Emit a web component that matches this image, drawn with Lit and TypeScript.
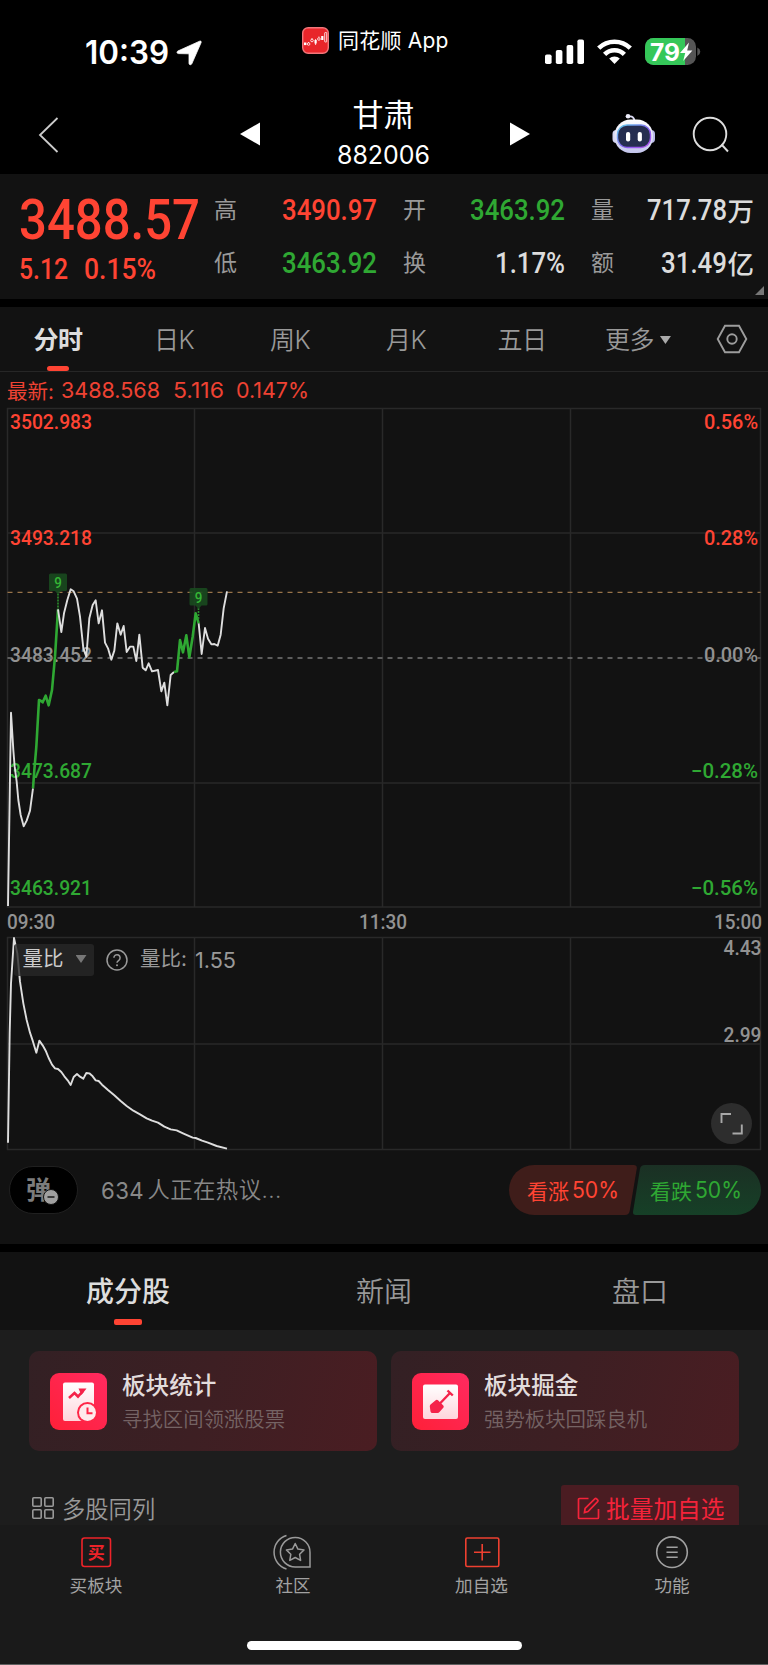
import { LitElement, html, css, svg } from "lit";
import { customElement } from "lit/decorators.js";

const toPath = (raw: string, dy: number) =>
  raw
    .trim()
    .split(/\s+/)
    .map((p) => {
      const [x, y] = p.split(",").map(Number);
      return `${(x / 3).toFixed(2)},${(y / 3 + dy).toFixed(2)}`;
    })
    .join(" ");

// Price series in third-pixel units, split where the run colour changes.
const price = [
  { c: "w", d: "24,1518 33,938 40,1050 44,1100 50,1145 55,1200 62,1245 71,1279 80,1262 90,1232 99,1165" },
  { c: "g", d: "99,1165 103,1110 109,1040 117,900 122,902 128,907 137,887 146,916 156,870 165,770 174,628" },
  { c: "w", d: "174,628 184,696 192,640 202,600 212,568 221,574 231,596 240,650 250,745 259,770 268,655 278,615 287,601 296,670 306,631 315,728 324,745 334,779 343,752 352,670 362,704 371,678 380,756 390,740 400,740 409,783 418,704 428,803 437,811 446,790 456,814 474,810 484,874 493,848 502,916 512,825 522,816" },
  { c: "g", d: "522,816 531,814 540,720 549,757 559,706 568,772 578,710 587,640 596,670" },
  { c: "w", d: "596,670 605,762 615,684 624,716 634,733 643,732 653,737 662,704 671,625 681,574" },
];
const ratio =
  "24,728 29,400 33,250 42,114 52,160 60,245 70,310 80,360 90,398 99,425 109,458 118,422 128,436 137,452 146,474 156,494 165,505 174,507 184,516 193,529 203,541 212,555 221,531 231,522 240,530 250,536 259,519 268,520 278,529 287,541 296,543 306,554 324,570 343,586 362,603 380,618 400,632 420,643 440,655 456,662 474,668 493,680 512,688 530,691 549,700 578,713 587,714 606,722 624,728 650,738 681,746";

const columns = [7.5, 194.5, 382.5, 570.5, 760.5];

// A numeric readout squeezed to a given width; the box is exactly cap-height tall.
const num = (text: string, width: number, cap: number, cls = "") => html`
  <svg class="num ${cls}" width=${width} height=${cap}>
    <text x="0" y=${cap} font-size=${cap / 0.711} textLength=${width} lengthAdjust="spacingAndGlyphs">${text}</text>
  </svg>`;

const label = (text: string, x: number, y: number, w: number, cls: string) => svg`
  <text class=${cls} x=${x} y=${y} font-size="20.6" textLength=${w} lengthAdjust="spacingAndGlyphs">${text}</text>`;

@customElement("app-root")
export class AppRoot extends LitElement {
  static styles = css`
    :host {
      display: block;
      width: 768px;
      height: 1665px;
      overflow: hidden;
      background: #000;
      color: #999;
      font-family: Inter, "Noto Sans CJK SC", sans-serif;
      --red: #ff4433;
      --green: #2fa833;
    }
    * { box-sizing: border-box; }
    svg { display: block; flex: none; overflow: visible; }
    .num { font-family: Roboto, sans-serif; font-weight: 500; fill: currentColor; }
    .sf { font-family: Inter, sans-serif; font-weight: 400; }
    .semi { font-weight: 600; }
    .red { color: var(--red); }
    .green { color: var(--green); }
    .lit { color: #dcdcdc; }

    .status { height: 88px; display: flex; color: #fff; align-items: flex-start; }
    .clock { width: 302px; padding: 41px 0 0 85px; display: flex; gap: 7px; }
    .source { width: 243px; padding-top: 27px; display: flex; align-items: center; gap: 9px; font-size: 21px; line-height: 27px; letter-spacing: 0.2px; }
    .source span { white-space: pre; }
    .system { padding-top: 38px; display: flex; align-items: center; gap: 13px; }

    .nav { height: 86px; display: flex; color: #fff; }
    .nav svg { margin-top: 24px; }
    .back { margin-left: 38px; }
    .prev { margin-left: 180px; }
    .title { width: 250px; padding-right: 3px; display: flex; flex-direction: column; align-items: center; }
    .title .name { font-size: 31px; line-height: 32px; margin-top: 11px; height: 47px; }
    .title svg { margin-top: 0; }
    .bot { margin-left: 80px; }
    .search { margin-left: 34px; }

    .panel { background: #121212; }
    .quote { height: 125px; padding-top: 25px; display: flex; position: relative; margin-bottom: 8px; }
    .last { width: 214px; padding-left: 19px; }
    .change { display: flex; gap: 16px; margin-top: 19px; }
    .stats { display: grid; grid-template-columns: 23px 140px 26px 23px 139px 26px 23px 140px; grid-template-rows: 22px 22px; row-gap: 31px; align-items: center; }
    .stats .k { font-size: 23px; line-height: 22px; }
    .stats .v { display: flex; justify-content: flex-end; align-items: center; gap: 1px; margin-top: -1px; }
    .stats .v b { font: 500 26.5px/22px "Noto Sans CJK SC"; }
    .corner { position: absolute; right: 4px; bottom: 4px; width: 9px; height: 9px; background: #777; clip-path: polygon(100% 0, 100% 100%, 0 100%); }

    .periods { height: 65px; display: flex; border-bottom: 1px solid #262626; font: 350 25px/58px Inter, "Noto Sans CJK SC"; }
    .periods .tab { width: 116px; display: flex; justify-content: center; align-items: center; gap: 6px; height: 64px; padding-top: 2px; position: relative; letter-spacing: -0.6px; }
    .periods .on { color: #ddd; font-weight: 700; }
    .periods .on::after { content: ""; position: absolute; left: 47px; bottom: 0; width: 22px; height: 5px; border-radius: 2.5px; background: var(--red); }
    .caret { width: 11px; height: 8px; background: #aaa; clip-path: polygon(0 0, 100% 0, 50% 100%); }
    .gear { margin: 17px 0 0 20px; }

    .latest { height: 36px; padding-left: 7px; display: flex; align-items: center; font-size: 20.5px; color: #ee4233; }
    .latest .k { width: 54px; }
    .latest .a { margin-right: 12.5px; }
    .chart text { font-family: Roboto, sans-serif; font-weight: 500; fill: #929292; }
    .chart text.r { fill: var(--red); }
    .chart text.g { fill: var(--green); }
    .chart text.flag { fill: #35b535; font-weight: 500; }
    .grid { stroke: #292929; stroke-width: 1.5; fill: none; }
    .w { stroke: #dedede; stroke-width: 1.9; fill: none; stroke-linejoin: round; }
    .g-line { stroke: #2fa833; stroke-width: 2.6; fill: none; stroke-linejoin: round; }

    .ratio { position: relative; }
    .legend { position: absolute; left: 14px; top: 7px; height: 32px; display: flex; align-items: center; font-size: 20.5px; line-height: 30px; }
    .pick { width: 80px; height: 32px; padding: 0 0 2px 8.500px; display: flex; align-items: center; gap: 12px; border-radius: 3px; background: rgba(40, 40, 40, 0.8); color: #ccc; }
    .pick .caret { background: #777; height: 8px; }
    .help { margin: 0 12px 0 12px; }
    .legend .k { width: 55px; padding-bottom: 2px; }
    .expand { position: absolute; left: 711px; top: 165.5px; width: 41px; height: 41px; border-radius: 50%; background: #2d2d2d; }

    .talk { height: 94px; padding: 15px 0 0 8.500px; display: flex; margin-bottom: 8px; }
    .bullet { position: relative; width: 69px; height: 48px; margin-top: 1px; border-radius: 24px; background: #000; border: 1px solid #202020; padding-left: 16.500px; font: 700 25px/42px "Noto Sans CJK SC"; color: #7c7c7c; }
    .bullet svg { position: absolute; left: 33px; top: 22px; }
    .hot { width: 431.500px; height: 50px; padding-left: 23px; display: flex; align-items: center; gap: 4px; font: 350 22.4px/50px Inter, "Noto Sans CJK SC"; letter-spacing: 0.4px; color: #888; }
    .votes { display: flex; }
    .vote { position: relative; width: 128px; height: 50px; display: flex; align-items: center; gap: 3px; font-size: 21px; }
    .vote.up { padding-left: 18px; }
    .vote.down { padding-left: 17px; margin-left: -4px; }
    .vote .shape { position: absolute; inset: 0; }
    .vote span, .vote .num { position: relative; }

    .sections { height: 78px; display: grid; grid-template-columns: repeat(3, 1fr); text-align: center; font: 350 28px/76px "Noto Sans CJK SC"; }
    .sections div { position: relative; }
    .sections .on { color: #ddd; font-weight: 500; }
    .sections .on::after { content: ""; position: absolute; left: 114px; top: 67px; width: 28px; height: 6px; border-radius: 2px; background: var(--red); }

    .body { height: 195px; background: #1d1d1d; padding: 21px 29px 0; overflow: hidden; }
    .cards { display: grid; grid-template-columns: 1fr 1fr; gap: 14px; }
    .card { height: 100px; border-radius: 10px; padding-left: 21px; display: flex; align-items: center; gap: 15px; background: linear-gradient(105deg, #332024 0%, #3d1f23 50%, #4a1d22 100%); }
    .card .h { font: 500 23.6px/32px "Noto Sans CJK SC"; color: #e2dcdc; }
    .card .s { font: 350 20.4px/32px "Noto Sans CJK SC"; color: #756364; margin-top: 2px; }
    .tools { margin-top: 34px; height: 46px; display: flex; justify-content: space-between; align-items: center; font: 350 23.3px/46px "Noto Sans CJK SC"; }
    .multi { display: flex; align-items: center; gap: 8px; padding-left: 3px; }
    .batch { width: 178px; height: 46px; border-radius: 3px; background: #4a1c22; color: #f4233a; display: flex; align-items: center; gap: 6px; padding-left: 16px; font-size: 23.7px; font-weight: 400; }

    .bottom { height: 140px; background: #1a1a1a; border-bottom: 1px solid #606060; }
    .actions { display: grid; grid-template-columns: repeat(4, 192px); height: 116px; }
    .act { display: flex; flex-direction: column; align-items: center; padding-top: 9px; font: 400 17.6px/20px "Noto Sans CJK SC"; color: #a2a2a2; }
    .act svg { margin-bottom: 5px; }
    .act.c { padding-left: 10px; }
    .act.p { padding-left: 3px; }
    .buy { font: 700 17px "Noto Sans CJK SC"; fill: #ee2329; }
    .home { width: 275px; height: 9px; border-radius: 5px; background: #fff; margin-left: 246.500px; }
  `;

  private grid(top: number, mids: number[], bottom: number) {
    return svg`<g class="grid">
      <rect x="7.5" y=${top} width="753" height=${bottom - top} />
      ${columns.slice(1, 4).map((x) => svg`<path d="M${x} ${top}V${bottom}" />`)}
      ${mids.map((y) => svg`<path d="M7.5 ${y}H760.5" />`)}
    </g>`;
  }

  private flag(x: number, top: number, end: number) {
    return svg`
      <path d="M${x} ${top + 20}V${end}" stroke="#2c8f2f" stroke-width="1.6" stroke-dasharray="2 1" />
      <path d="M${x - 9} ${top + 1.5}q0-1.5 1.5-1.5h15q1.5 0 1.5 1.5V${top + 16}q0 1.5-1.5 1.5h-4.500l-3 3.500l-3-3.500h-4.500q-1.500 0-1.500-1.500z" fill="#1a4a1f" fill-opacity=".9" />
      <text class="flag" x=${x - 3.8} y=${top + 14.8} font-size="14.5" textLength="7.6" lengthAdjust="spacingAndGlyphs">9</text>`;
  }

  render() {
    return html`
      <div class="status">
        <div class="clock">
          ${num("10:39", 84, 23, "sf semi")}
          <svg width="26" height="25" viewBox="0 0 26 25"><path d="M23.600.2C24.700-.3 25.600.5 25.100 1.600L15.800 22.800c-.6 1.400-2.700 1.200-2.800-.4V12.800L2.500 12.600C.8 12.500.5 10.700 1.900 10z" fill="#fff" stroke="#fff" stroke-width=".8" /></svg>
        </div>
        <div class="source">
          <svg width="27" height="27" viewBox="0 0 27 27">
            <rect x=".7" y=".7" width="25.600" height="25.600" rx="5.500" fill="#e8252a" stroke="#f2767a" stroke-width="1.400" />
            <g fill="#fff"><rect x="2" y="15.500" width="2.400" height="2.600" /><rect x="12.500" y="13" width="2.200" height="3.500" /><rect x="19.200" y="9" width="2.200" height="4" /></g>
            <g fill="none" stroke="#fff" stroke-width=".8"><circle cx="6.600" cy="17" r="1.300" /><circle cx="10" cy="13.500" r="1.300" /><circle cx="16.900" cy="12" r="1.300" /><rect x="22.700" y="5.500" width="2" height="9.500" rx=".6" /><path d="M10 11v1M16.900 9.500v1M6.600 15v1M13.600 12v6" /></g>
          </svg>
          <span>同花顺 App</span>
        </div>
        <div class="system">
          <svg width="39" height="25" viewBox="0 0 39 25" fill="#fff"><rect y="15.500" width="6.600" height="9.500" rx="1.800" /><rect x="10.800" y="11" width="6.600" height="14" rx="1.800" /><rect x="21.600" y="6" width="6.600" height="19" rx="1.800" /><rect x="32.400" y=".5" width="6.600" height="24.500" rx="1.800" /></svg>
          <svg width="35" height="25" viewBox="0 0 35 25"><g fill="none" stroke="#fff" stroke-width="4.600"><path d="M1.700 9.200a22.600 22.600 0 0 1 31.600 0" /><path d="M7.600 15.300a14.200 14.200 0 0 1 19.800 0" /></g><path d="M17.500 25l-5.300-5.400a7.600 7.600 0 0 1 10.600 0z" fill="#fff" /></svg>
          <svg width="55" height="27" viewBox="0 0 55 27">
            <clipPath id="bat"><rect width="51" height="27" rx="8.500" /></clipPath>
            <g clip-path="url(#bat)"><rect width="51" height="27" fill="#555" /><rect width="40" height="27" fill="#35c759" /></g>
            <path d="M52.300 9.500q3 1.500 3 4.200t-3 4.200z" fill="#555" />
            <path d="M44 4.500L35 15h5.200l-2 8 9.200-10.500h-5.200z" fill="#fff" />
            <text x="5" y="22.500" font-family="Inter" font-weight="700" font-size="24" fill="#fff" textLength="30" lengthAdjust="spacingAndGlyphs">79</text>
          </svg>
        </div>
      </div>

      <div class="nav">
        <svg class="back" width="22" height="46" viewBox="39 112 22 46"><path d="M58.500 118L41 135l17.500 17" fill="none" stroke="#ccc" stroke-width="1.800" /></svg>
        <svg class="prev" width="20" height="46" viewBox="241 112 20 46"><path d="M241 134l20-11.500v23z" fill="#fff" /></svg>
        <div class="title">
          <div class="name">甘肃</div>
          ${num("882006", 93, 18, "sf")}
        </div>
        <svg width="20" height="46" viewBox="511 112 20 46"><path d="M531 134l-20-11.500v23z" fill="#fff" /></svg>
        <svg class="bot" width="48" height="46" viewBox="610 112 48 46">
          <defs>
            <linearGradient id="shell" x1="0" y1="0" x2="0" y2="1"><stop offset="0" stop-color="#fff" /><stop offset="1" stop-color="#c3c5ec" /></linearGradient>
            <linearGradient id="rim" x1="0" y1="0" x2="1" y2="1"><stop offset="0" stop-color="#5fd0ea" /><stop offset=".6" stop-color="#8a5cf0" /><stop offset="1" stop-color="#b455ee" /></linearGradient>
          </defs>
          <path d="M628.500 116.500q5-1 6 4" fill="none" stroke="#dcdcf5" stroke-width="1.800" /><circle cx="628" cy="116.300" r="2.300" fill="#eeeefc" />
          <rect x="612.500" y="130" width="8" height="13" rx="4" fill="#d5d6f2" /><rect x="647" y="130" width="8" height="13" rx="4" fill="#b9bbe8" />
          <rect x="614.500" y="119.500" width="38.500" height="33.500" rx="16" fill="url(#shell)" />
          <rect x="617.500" y="125" width="33" height="22.500" rx="9.500" fill="#262e50" stroke="url(#rim)" stroke-width="1.400" />
          <rect x="626" y="132" width="4.200" height="9.500" rx="2" fill="#fff" /><rect x="637.700" y="132" width="4.200" height="9.500" rx="2" fill="#fff" />
        </svg>
        <svg class="search" width="38" height="46" viewBox="692 112 38 46"><g fill="none" stroke="#ddd" stroke-width="1.900"><circle cx="710" cy="134" r="16.300" /><path d="M721.500 144.500l6.500 7" /></g></svg>
      </div>

      <div class="panel quote">
        <div class="last red">
          ${num("3488.57", 181, 39.5)}
          <div class="change">${num("5.12", 49, 20.5)}${num("0.15%", 72, 20.5)}</div>
        </div>
        <div class="stats">
          <span class="k">高</span><span class="v red">${num("3490.97", 95, 21)}</span><i></i>
          <span class="k">开</span><span class="v green">${num("3463.92", 95, 21)}</span><i></i>
          <span class="k">量</span><span class="v lit">${num("717.78", 80, 21)}<b>万</b></span>
          <span class="k">低</span><span class="v green">${num("3463.92", 95, 21)}</span><i></i>
          <span class="k">换</span><span class="v lit">${num("1.17%", 70, 21)}</span><i></i>
          <span class="k">额</span><span class="v lit">${num("31.49", 66, 21)}<b>亿</b></span>
        </div>
        <div class="corner"></div>
      </div>

      <div class="panel">
        <div class="periods">
          <div class="tab on">分时</div><div class="tab">日K</div><div class="tab">周K</div><div class="tab">月K</div><div class="tab">五日</div>
          <div class="tab">更多<i class="caret"></i></div>
          <svg class="gear" width="32" height="30" viewBox="0 0 32 30"><g fill="none" stroke="#9d9d9d" stroke-width="1.900"><path d="M9 1.700h14L30.300 15 23 28.300H9L1.700 15z" /><circle cx="16" cy="15" r="4.700" /></g></svg>
        </div>
        <div class="latest">
          <span class="k">最新:</span>
          ${num("3488.568", 99, 15.5, "sf a")}${num("5.116", 51, 15.5, "sf a")}${num("0.147%", 73, 15.5, "sf")}
        </div>

        <svg class="chart" width="768" height="529" viewBox="0 408 768 529">
          ${this.grid(408.5, [533, 783], 907)}
          ${label("3502.983", 10, 428.7, 82, "r")}${label("3493.218", 10, 545, 82, "r")}${label("3483.452", 10, 661.5, 82, "")}
          ${label("3473.687", 10, 778, 82, "g")}${label("3463.921", 10, 894.5, 82, "g")}
          ${label("0.56%", 704, 428.7, 54, "r")}${label("0.28%", 704, 545, 54, "r")}${label("0.00%", 704, 661.5, 54, "")}
          ${label("−0.28%", 691, 778, 67, "g")}${label("−0.56%", 691, 894.5, 67, "g")}
          <path d="M7.500 592.400H760.500" stroke="#97734a" stroke-width="1.300" stroke-dasharray="5 5" />
          <path d="M7.500 658H760.500" stroke="#777" stroke-width="1.400" stroke-dasharray="5 5" />
          ${price.map((s) => svg`<polyline class=${s.c === "w" ? "w" : "g-line"} points=${toPath(s.d, 400)} />`)}
          ${this.flag(58, 573.5, 609)}${this.flag(198.5, 588, 620)}
          ${label("09:30", 7, 929, 48, "")}${label("11:30", 359, 929, 48, "")}${label("15:00", 714, 929, 48, "")}
        </svg>

        <div class="ratio">
          <svg class="chart" width="768" height="213" viewBox="0 937 768 213">
            ${this.grid(937.5, [1044], 1149.5)}
            ${label("4.43", 723.5, 954.5, 38, "")}${label("2.99", 723.5, 1042, 38, "")}
            <polyline class="w" points=${toPath(ratio, 900)} />
          </svg>
          <div class="legend">
            <div class="pick">量比<i class="caret"></i></div>
            <svg class="help" width="22" height="22" viewBox="0 0 22 22"><circle cx="11" cy="11" r="10" fill="none" stroke="#9a9a9a" stroke-width="1.500" /><path d="M7.900 8.800a3.100 3.100 0 1 1 4.900 2.500q-1.800 1.200-1.800 2.500" fill="none" stroke="#9a9a9a" stroke-width="1.500" /><circle cx="11" cy="16.300" r="1" fill="#9a9a9a" /></svg>
            <span class="k">量比:</span>${num("1.55", 41, 15.5, "sf")}
          </div>
          <div class="expand"><svg width="41" height="41" viewBox="0 0 41 41"><path d="M10.500 20v-9h9.500M21.500 30.500h9.300v-9" fill="none" stroke="#a8a8a8" stroke-width="1.900" /></svg></div>
        </div>

        <div class="talk">
          <div class="bullet">弹<svg width="16" height="16" viewBox="0 0 16 16"><circle cx="8" cy="8" r="7.500" fill="#a0a0a0" stroke="#111" /><path d="M4.500 8h7" stroke="#222" stroke-width="1.600" /></svg></div>
          <div class="hot">${num("634", 43, 16.5, "sf")}<span>人正在热议...</span></div>
          <div class="votes">
            <div class="vote up red">
              <svg class="shape" width="128" height="50" viewBox="0 0 128 50"><path d="M25 0H124.500q3.800 0 3.300 3.600L120.700 46q-.7 4-4.500 4H25A25 25 0 0 1 25 0z" fill="#3f1d1a" /></svg>
              <span>看涨</span>${num("50%", 47, 16, "sf")}
            </div>
            <div class="vote down green">
              <svg class="shape" width="128" height="50" viewBox="0 0 128 50">
                <linearGradient id="fall" x1="0" y1="0" x2="0" y2="1"><stop offset="0" stop-color="#1b3024" /><stop offset="1" stop-color="#164027" /></linearGradient>
                <path d="M12 0H103a25 25 0 0 1 0 50H3Q-.4 50 .1 46.500L7 4q.7-4 5-4z" fill="url(#fall)" />
              </svg>
              <span>看跌</span>${num("50%", 47, 16, "sf")}
            </div>
          </div>
        </div>
      </div>

      <div class="panel sections"><div class="on">成分股</div><div>新闻</div><div>盘口</div></div>

      <div class="body">
        <div class="cards">
          <div class="card">
            <svg width="57" height="57" viewBox="0 0 57 57">
              <defs>
                <linearGradient id="tile" x1="0" y1="1" x2="1" y2="0"><stop offset="0" stop-color="#ff2038" /><stop offset="1" stop-color="#ff2a60" /></linearGradient>
                <linearGradient id="paper" x1="0" y1="0" x2="0" y2="1"><stop offset="0" stop-color="#fff" /><stop offset="1" stop-color="#ffd5dc" /></linearGradient>
              </defs>
              <rect width="57" height="57" rx="9" fill="url(#tile)" />
              <rect x="13" y="9.500" width="31" height="38.500" rx="2" fill="url(#paper)" />
              <path d="M19 25l5.500-5 3.500 3.500 5-5.500" fill="none" stroke="#f5234a" stroke-width="2.600" /><path d="M28.500 15.500h8l-5 6.500z" fill="#f5234a" />
              <circle cx="37.500" cy="39.500" r="10.500" fill="#ff2547" /><circle cx="37.500" cy="39.500" r="8.500" fill="#ffe9ec" />
              <path d="M37.500 34.500v5.700h5" fill="none" stroke="#ff2547" stroke-width="2" />
            </svg>
            <div><div class="h">板块统计</div><div class="s">寻找区间领涨股票</div></div>
          </div>
          <div class="card">
            <svg width="57" height="57" viewBox="0 0 57 57">
              <rect width="57" height="57" rx="9" fill="url(#tile)" />
              <rect x="11" y="11.500" width="35" height="34.500" rx="2" fill="url(#paper)" />
              <path d="M18.500 31.500l5.500-4.500q1-.7 2 .2l5.300 5.300q.8.900.2 1.900L27.500 39q-.7 1-2 1h-5q-1.700 0-2-1.500l-.7-5q-.1-1.200.7-2z" fill="#f5234a" />
              <path d="M26.500 32l11.500-12M35.500 17.500l5.300 5" stroke="#f5234a" stroke-width="2.400" />
            </svg>
            <div><div class="h">板块掘金</div><div class="s">强势板块回踩良机</div></div>
          </div>
        </div>
        <div class="tools">
          <div class="multi">
            <svg width="22" height="22" viewBox="0 0 22 22" fill="none" stroke="#999" stroke-width="1.600"><rect x=".8" y=".8" width="8.400" height="8.400" rx="1" /><rect x="12.800" y=".8" width="8.400" height="8.400" rx="1" /><rect x=".8" y="12.800" width="8.400" height="8.400" rx="1" /><rect x="12.800" y="12.800" width="8.400" height="8.400" rx="1" /></svg>
            多股同列
          </div>
          <div class="batch">
            <svg width="23" height="23" viewBox="0 0 23 23" fill="none" stroke="#f4233a" stroke-width="1.700"><path d="M11.500 1.500H2.500q-1 0-1 1v18q0 1 1 1h18q1 0 1-1V12" /><path d="M7.500 15.500l.6-4L17.800 1.800q.9-.9 1.800 0l1 1q.9.900 0 1.800L11 14.500z" /></svg>
            批量加自选
          </div>
        </div>
      </div>

      <div class="bottom">
        <div class="actions">
          <div class="act">
            <svg width="36" height="36" viewBox="0 0 36 36"><rect x="4" y="4" width="28.500" height="28.500" rx="2.500" fill="none" stroke="#ee2329" stroke-width="1.600" /><text class="buy" x="9.700" y="24.600">买</text></svg>
            买板块
          </div>
          <div class="act c">
            <svg width="38" height="36" viewBox="0 0 38 36" fill="none" stroke="#9a9a9a" stroke-width="1.500"><path d="M36 33V18.500A14.800 14.800 0 1 0 21.200 33z" /><path d="M12.500 1.500A17.500 17.500 0 0 0 12.500 35" /><path d="M21.200 9.500l2.700 5.600 6.100.9-4.400 4.300 1 6.100-5.400-2.900-5.400 2.900 1-6.100-4.400-4.300 6.100-.9z" stroke-linejoin="round" /></svg>
            社区
          </div>
          <div class="act p">
            <svg width="36" height="36" viewBox="0 0 36 36" fill="none" stroke="#ee4030" stroke-width="1.600"><rect x="1.800" y="4" width="33" height="28.500" rx="1.500" /><path d="M10 18.200h16.500M18.200 10v16.500" /></svg>
            加自选
          </div>
          <div class="act">
            <svg width="36" height="36" viewBox="0 0 36 36" fill="none" stroke="#a0a0a0" stroke-width="1.600"><circle cx="18" cy="18.200" r="15.300" /><path d="M12.500 13.200h11.200M12.500 18.200h11.200M12.500 23.200h11.200" /></svg>
            功能
          </div>
        </div>
        <div class="home"></div>
      </div>
    `;
  }
}
